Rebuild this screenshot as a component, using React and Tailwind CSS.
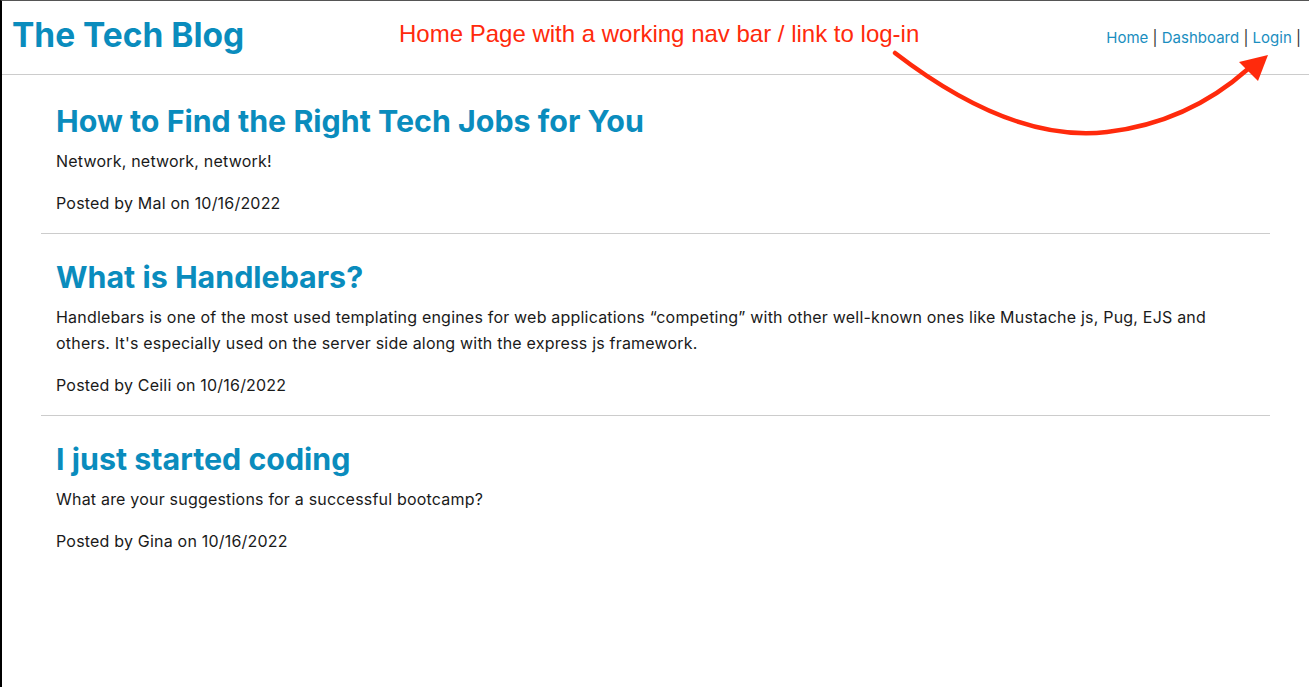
import React from 'react'

const posts = [
  {
    title: 'How to Find the Right Tech Jobs for You',
    body: 'Network, network, network!',
    author: 'Mal',
    date: '10/16/2022'
  },
  {
    title: 'What is Handlebars?',
    body: "Handlebars is one of the most used templating engines for web applications \u201Ccompeting\u201D with other well-known ones like Mustache js, Pug, EJS and others. It's especially used on the server side along with the express js framework.",
    author: 'Ceili',
    date: '10/16/2022'
  },
  {
    title: 'I just started coding',
    body: 'What are your suggestions for a successful bootcamp?',
    author: 'Gina',
    date: '10/16/2022'
  }
]

const Post = ({ post, last }) => (
  <article className={`px-[15px] pt-[25px] pb-[17px] ${last ? '' : 'border-b border-[#cccccc]'}`}>
    <h2 className="text-[30.4px] leading-[36px] font-bold text-[#0a8cbd]">{post.title}</h2>
    <p className="mt-[9px] text-[16px] leading-[26px] tracking-[0.2px] text-[#1a1a1a]">{post.body}</p>
    <p className="mt-[16px] text-[16px] leading-[26px] tracking-[0.2px] text-[#1a1a1a]">
      Posted by {post.author} on {post.date}
    </p>
  </article>
)

const App = () => {
  return (
    <div className="relative min-h-[687px] bg-white border-l-2 border-l-black border-t border-t-[#555555] font-['Inter',sans-serif] overflow-hidden">
      <header className="h-[74px] border-b border-[#cccccc] flex items-center justify-between pl-[10px] pr-[8px]">
        <h1 className="text-[33.5px] font-bold text-[#0a8cbd] leading-none -mt-[4px]">The Tech Blog</h1>
        <nav className="text-[15px] text-[#333333] mt-[1px]">
          <a className="text-[#1a8ec0]" href="#">Home</a> | <a className="text-[#1a8ec0]" href="#">Dashboard</a> | <a className="text-[#1a8ec0]" href="#">Login</a> |
        </nav>
      </header>

      {/* annotation overlay */}
      <div className="absolute left-[397px] top-[19px] text-[24px] leading-[28px] text-[#ff2a0c] font-['Liberation_Sans',Arial,sans-serif]">
        Home Page with a working nav bar / link to log-in
      </div>
      <svg className="absolute left-0 top-0 pointer-events-none" width="1309" height="687" viewBox="0 0 1309 687">
        <path d="M893 52 C 975 115, 1045 138, 1105 131 C 1165 124, 1210 100, 1246 68" fill="none" stroke="#ff2a0c" strokeWidth="4.5" strokeLinecap="round" />
        <polygon points="1237,61 1266,54 1256,80" fill="#ff2a0c" />
      </svg>

      <main className="mx-[39px] pt-[3px]">
        {posts.map((post, i) => (
          <Post key={post.title} post={post} last={i === posts.length - 1} />
        ))}
      </main>
    </div>
  )
}

export default App
